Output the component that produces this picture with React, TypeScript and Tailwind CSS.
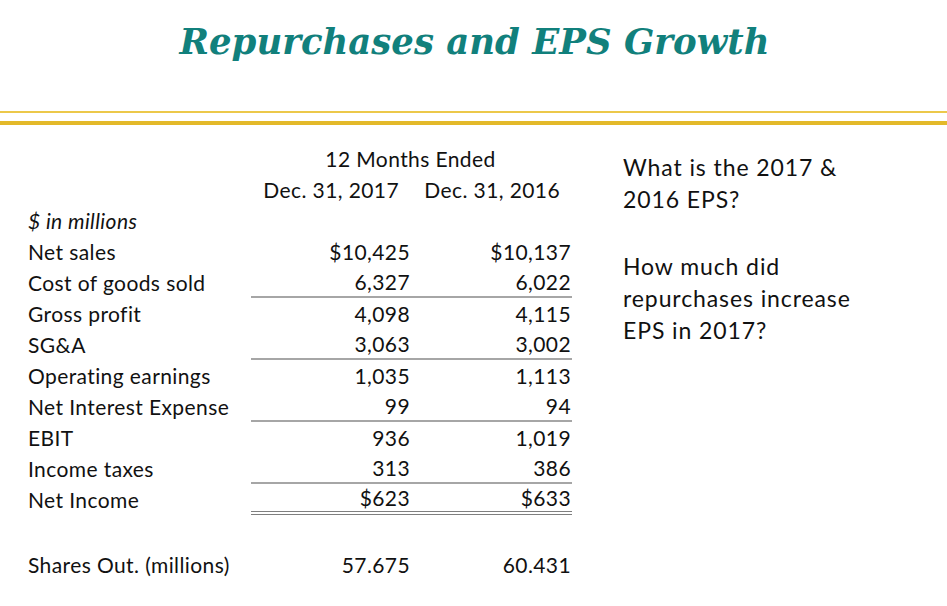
const rows: { label: string; a: string; b: string; line?: 'single' | 'double' }[] = [
  { label: 'Net sales', a: '$10,425', b: '$10,137' },
  { label: 'Cost of goods sold', a: '6,327', b: '6,022', line: 'single' },
  { label: 'Gross profit', a: '4,098', b: '4,115' },
  { label: 'SG&A', a: '3,063', b: '3,002', line: 'single' },
  { label: 'Operating earnings', a: '1,035', b: '1,113' },
  { label: 'Net Interest Expense', a: '99', b: '94', line: 'single' },
  { label: 'EBIT', a: '936', b: '1,019' },
  { label: 'Income taxes', a: '313', b: '386', line: 'single' },
  { label: 'Net Income', a: '$623', b: '$633', line: 'double' },
];

function ValueCell({ value, line }: { value: string; line?: 'single' | 'double' }) {
  const border =
    line === 'single'
      ? 'border-b-2 border-[#a6a6a6]'
      : line === 'double'
        ? 'border-b-[4px] border-double border-[#7f7f7f]'
        : '';
  return (
    <div className={`h-[31px] flex items-center justify-end pr-[1px] ${border}`}>
      {value}
    </div>
  );
}

export default function App() {
  return (
    <div
      className="w-[947px] h-[606px] bg-white text-black overflow-hidden"
      style={{ fontFamily: 'Lato, "Open Sans", sans-serif' }}
    >
      {/* Title */}
      <div className="h-[111px] flex justify-center pt-[20px] pl-[2px]">
        <h1
          className="text-[35.5px] leading-[44px] font-bold italic text-[#11807c]"
          style={{ fontFamily: '"DejaVu Serif", "Liberation Serif", serif' }}
        >
          Repurchases and EPS Growth
        </h1>
      </div>
      <div className="h-[2px] bg-[#ecc84a]" />
      <div className="h-[8px]" />
      <div className="h-[4px] bg-[#e3b92a]" />

      {/* Body */}
      <div className="flex pt-[18px]">
        <div className="pl-[28px] text-[21px] tracking-[0.4px] text-[#111]">
          <div className="grid grid-cols-[223px_160px_161px]">
            <div className="h-[31px]" />
            <div className="col-span-2 h-[31px] flex items-center justify-center pr-[2px]">
              12 Months Ended
            </div>
            <div className="h-[31px]" />
            <div className="h-[31px] flex items-center justify-end pr-[12px]">Dec. 31, 2017</div>
            <div className="h-[31px] flex items-center justify-end pr-[12px]">Dec. 31, 2016</div>
            <div className="h-[31px] flex items-center italic">$ in millions</div>
            <div className="h-[31px]" />
            <div className="h-[31px]" />
            {rows.map((r) => (
              <>
                <div key={r.label} className="h-[31px] flex items-center">
                  {r.label}
                </div>
                <ValueCell value={r.a} line={r.line} />
                <ValueCell value={r.b} line={r.line} />
              </>
            ))}
            <div className="h-[34px] col-span-3" />
            <div className="h-[31px] flex items-center">Shares Out. (millions)</div>
            <div className="h-[31px] flex items-center justify-end pr-[1px]">57.675</div>
            <div className="h-[31px] flex items-center justify-end pr-[1px]">60.431</div>
          </div>
        </div>

        <div className="pl-[51px] pt-[8px] text-[23px] tracking-[0.9px] leading-[32px] text-[#111]">
          <p>What is the 2017 &amp;</p>
          <p>2016 EPS?</p>
          <p className="mt-[35px]">How much did</p>
          <p>repurchases increase</p>
          <p>EPS in 2017?</p>
        </div>
      </div>
    </div>
  );
}
